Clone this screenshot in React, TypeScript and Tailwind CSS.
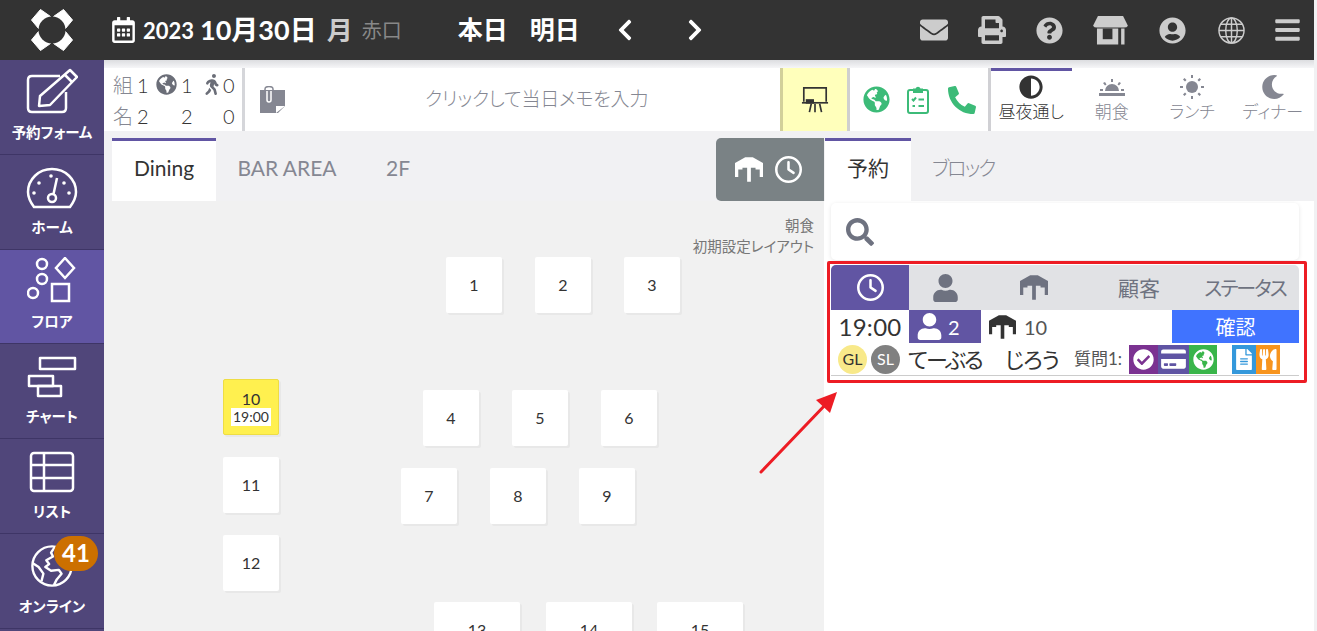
import { ReactNode } from 'react';
import {
  FaAdjust, FaBars, FaCheckCircle, FaChevronLeft, FaChevronRight, FaCreditCard, FaEnvelope,
  FaFileAlt, FaGlobeAmericas, FaMoon, FaPhoneAlt, FaPrint, FaQuestionCircle, FaRegCalendarAlt, FaSearch, FaUser,
  FaUserCircle, FaUtensils, FaWalking,
} from 'react-icons/fa';
import { FaRegClock } from 'react-icons/fa6';

function Logo() {
  return (
    <svg width="44" height="44" viewBox="0 0 44 44" className="shrink-0">
      <g fill="#fff" stroke="#fff" strokeWidth="1" strokeLinejoin="round">
        <path d="M1.500 12L10.500 1.500 20.500 8.500 8.500 20.500Z" />
        <path d="M42.500 12L33.500 1.500 23.500 8.500 35.500 20.500Z" />
        <path d="M1.500 32L10.500 42.500 20.500 35.500 8.500 23.500Z" />
        <path d="M42.500 32L33.500 42.500 23.500 35.500 35.500 23.500Z" />
      </g>
      <circle cx="22" cy="22" r="13.500" fill="#333" />
    </svg>
  );
}

function TableIcon({ className }: { className?: string }) {
  return (
    <svg viewBox="0 0 30 26" className={className} fill="currentColor">
      <path d="M11 0H19L30 6V11H0V6Z" />
      <path d="M0 10H3.500V21H0ZM26.500 10H30V21H26.500ZM13 10H17V26H13ZM3 10H8V13H3ZM22 10H27V13H22Z" />
    </svg>
  );
}

function StoreIcon() {
  return (
    <svg viewBox="0 0 36 30" className="w-[35px] h-[29px]" fill="#ccc">
      <path d="M5 0H31L36 10Q35 12 32 12H4Q1 12 0 10Z" />
      <path d="M4 13H26V29.500H4ZM29 13H32.500V29.500H29Z" />
      <path d="M10 13H20V24H10Z" fill="#333" />
    </svg>
  );
}

function EditIcon() {
  return (
    <svg viewBox="0 0 52 46" className="w-[52px] h-[46px]" fill="none" stroke="#fff" strokeWidth="2.500" strokeLinejoin="round">
      <path d="M34 8H6Q2 8 2 12V40Q2 44 6 44H36Q40 44 40 40V24" />
      <path d="M44 2L51 9 24 37 13 38 14 28Z" />
      <path d="M39 7L46 14" />
    </svg>
  );
}

function GaugeIcon() {
  return (
    <svg viewBox="0 0 52 42" className="w-[52px] h-[42px]" fill="none" stroke="#fff" strokeWidth="2.500">
      <path d="M8 40Q2 32 2 25A24 23 0 0 1 50 25Q50 32 44 40Z" strokeLinejoin="round" />
      <circle cx="26" cy="31" r="4" />
      <path d="M27.500 27L31 11" />
      <g fill="#fff" stroke="none">
        <circle cx="13" cy="16" r="1.800" /><circle cx="25" cy="9" r="1.800" /><circle cx="38" cy="16" r="1.800" />
        <circle cx="8" cy="26" r="1.800" /><circle cx="43" cy="26" r="1.800" />
      </g>
    </svg>
  );
}

function FloorIcon() {
  return (
    <svg viewBox="0 0 50 46" className="w-[50px] h-[46px]" fill="none" stroke="#fff" strokeWidth="2.500">
      <circle cx="15" cy="7" r="5" />
      <circle cx="15" cy="22" r="5" />
      <circle cx="6" cy="36" r="5" />
      <path d="M38 1L47 11 38 21 29 11Z" />
      <rect x="25" y="27" width="17" height="17" />
    </svg>
  );
}

function ChartIcon() {
  return (
    <svg viewBox="0 0 50 42" className="w-[50px] h-[42px]" fill="none" stroke="#fff" strokeWidth="2.500" strokeLinejoin="round">
      <rect x="13" y="2" width="35" height="11" />
      <rect x="2" y="20" width="24" height="10" />
      <rect x="11" y="30" width="23" height="10" />
    </svg>
  );
}

function ListIcon() {
  return (
    <svg viewBox="0 0 46 42" className="w-[46px] h-[42px]" fill="none" stroke="#fff" strokeWidth="2.500" strokeLinejoin="round">
      <rect x="2" y="2" width="42" height="38" rx="3" />
      <path d="M2 14H44M2 27H44M15 2V40" />
    </svg>
  );
}

function GlobeIcon() {
  return (
    <svg viewBox="0 0 46 46" className="w-[44px] h-[44px]" fill="none" stroke="#fff" strokeWidth="2.500" strokeLinejoin="round">
      <circle cx="23" cy="23" r="20.500" />
      <path d="M26 3L22 9 24 13 17 17 20 21 16 24 22 28 30 27 33 31 28 37 25 43" />
      <path d="M3 20L9 24 14 31 12 39" />
    </svg>
  );
}

function PresentationIcon() {
  return (
    <svg viewBox="0 0 30 30" className="w-[28px] h-[28px]" fill="none" stroke="#333" strokeWidth="1.800">
      <path d="M3 17V2H27V17" />
      <path d="M1 18H29" />
      <path d="M11 19L9 28M15 19V28M20 19L22 28" />
      <rect x="6" y="15" width="7" height="3" fill="#333" />
    </svg>
  );
}

function SunriseIcon() {
  return (
    <svg viewBox="0 0 26 24" className="w-[26px] h-[24px]" fill="#858792">
      <path d="M6 16A7 7 0 0 1 20 16ZM0 18H26V21H0ZM1 14H4V16H1ZM22 14H25V16H22Z" />
      <path d="M12 4H14V7H12ZM4 8L6 7 7.500 9.500 6 10.500ZM22 8L20 7 18.500 9.500 20 10.500Z" />
    </svg>
  );
}

function SunIcon() {
  return (
    <svg viewBox="0 0 24 24" className="w-[24px] h-[24px]" fill="#858792">
      <circle cx="12" cy="12" r="6" />
      <path d="M11 0H13V3H11ZM11 21H13V24H11ZM0 11H3V13H0ZM21 11H24V13H21Z" />
      <path d="M3 4.500L4.500 3 6.500 5 5 6.500ZM21 4.500L19.500 3 17.500 5 19 6.500ZM3 19.500L4.500 21 6.500 19 5 17.500ZM21 19.500L19.500 21 17.500 19 19 17.500Z" />
    </svg>
  );
}

function ClipboardIcon() {
  return (
    <svg viewBox="0 0 22 28" className="w-[22px] h-[28px]" fill="none" stroke="#3cbb78" strokeWidth="2">
      <path d="M7 4H3Q1 4 1 6V25Q1 27 3 27H19Q21 27 21 25V6Q21 4 19 4H15" />
      <path d="M7 6V3.500H9Q11 0 13 3.500H15V6Z" fill="#3cbb78" />
      <path d="M5 13L6.500 14.500 9 11.500M11.500 13.500H17M5.500 20H8M11.500 20H17" />
    </svg>
  );
}

function NoteIcon() {
  return (
    <svg viewBox="0 0 25 27" className="ml-[15px] w-[25px] h-[27px]">
      <path d="M0 4H25V20L18 27H0Z" fill="#858792" />
      <path d="M16 27V20H25Z" fill="#fff" />
      <path d="M5 4V15Q5 18 9 18 13 18 13 15V3Q13 0.500 9 0.500 5 0.500 5 3V4" fill="none" stroke="#858792" strokeWidth="1.500" />
      <path d="M7 5V14Q7 16 9 16 11 16 11 14V5" fill="none" stroke="#fff" strokeWidth="1.500" />
    </svg>
  );
}

const navItems = [
  { label: '予約フォーム', icon: <EditIcon /> },
  { label: 'ホーム', icon: <GaugeIcon /> },
  { label: 'フロア', icon: <FloorIcon />, active: true },
  { label: 'チャート', icon: <ChartIcon /> },
  { label: 'リスト', icon: <ListIcon /> },
  { label: 'オンライン', icon: <GlobeIcon />, badge: '41' },
];

const floorTables = [
  { no: '1', left: 342, top: 56 }, { no: '2', left: 431, top: 56 }, { no: '3', left: 520, top: 56 },
  { no: '4', left: 319, top: 189 }, { no: '5', left: 408, top: 189 }, { no: '6', left: 497, top: 189 },
  { no: '7', left: 297, top: 267 }, { no: '8', left: 386, top: 267 }, { no: '9', left: 475, top: 267 },
  { no: '11', left: 119, top: 256 }, { no: '12', left: 119, top: 334 },
];

const mealTabs = [
  { label: '昼夜通し', icon: <FaAdjust className="w-6 h-6 text-[#333]" />, active: true },
  { label: '朝食', icon: <SunriseIcon /> },
  { label: 'ランチ', icon: <SunIcon /> },
  { label: 'ディナー', icon: <FaMoon className="w-6 h-6 text-[#858792]" /> },
];

function TopIcon({ width, children }: { width: string; children: ReactNode }) {
  return <div className={`flex justify-center items-center ${width}`}>{children}</div>;
}

function StatusBox({ className, children }: { className: string; children: ReactNode }) {
  return <div className={`flex items-center justify-center h-[29px] text-white ${className}`}>{children}</div>;
}

export default function App() {
  return (
    <div className="relative h-[631px] w-[1317px] overflow-hidden bg-[#f1f1f3] font-[Lato,'Noto_Sans_CJK_JP',sans-serif] [font-feature-settings:'palt'] text-[#333]">
      <header className="flex items-center h-[60px] w-[1314px] bg-[#333] text-white">
        <div className="w-[104px] flex justify-center"><Logo /></div>
        <FaRegCalendarAlt className="ml-[8px] w-[23px] h-[26px]" />
        <span className="ml-[8px] text-[22px] font-bold">2023</span>
        <span className="ml-[6px] text-[27px] font-bold">10月30日</span>
        <span className="ml-[10px] text-[26px] font-bold text-[#ccc]">月</span>
        <span className="ml-[9px] text-[20px] text-[#888]">赤口</span>
        <span className="ml-[56px] text-[25px] font-bold">本日</span>
        <span className="ml-[22px] text-[25px] font-bold">明日</span>
        <FaChevronLeft className="ml-[37px] w-[16px] h-[24px]" />
        <FaChevronRight className="ml-[54px] w-[16px] h-[24px]" />
        <div className="ml-[217px] flex items-center text-[#ccc]">
          <TopIcon width="w-[28px]"><FaEnvelope className="w-[28px] h-[28px]" /></TopIcon>
          <TopIcon width="w-[28px] ml-[30px]"><FaPrint className="w-[28px] h-[28px]" /></TopIcon>
          <TopIcon width="w-[28px] ml-[30px]"><FaQuestionCircle className="w-[27px] h-[27px]" /></TopIcon>
          <TopIcon width="w-[35px] ml-[29px]"><StoreIcon /></TopIcon>
          <TopIcon width="w-[28px] ml-[31px]"><FaUserCircle className="w-[27px] h-[27px]" /></TopIcon>
          <TopIcon width="w-[28px] ml-[31px]">
            <svg viewBox="0 0 28 28" className="w-[27px] h-[27px]" fill="none" stroke="#ccc" strokeWidth="1.500">
              <circle cx="14" cy="14" r="13" />
              <ellipse cx="14" cy="14" rx="6" ry="13" />
              <path d="M14 1V27M1 14H27M3 7.500H25M3 20.500H25" />
            </svg>
          </TopIcon>
          <TopIcon width="w-[25px] ml-[29px]"><FaBars className="w-[25px] h-[28px]" /></TopIcon>
        </div>
      </header>

      <div className="flex h-[571px]">
        <nav className="w-[104px] shrink-0 bg-[#50467a] text-white">
          {navItems.map((item) => (
            <div
              key={item.label}
              className={`relative flex flex-col items-center justify-end h-[94.800px] pb-[11px] border-b border-[#3e3566] ${item.active ? 'bg-[#6155a3]' : ''}`}
            >
              {item.icon}
              <span className="mt-[9px] text-[14.500px] leading-[20px] font-bold whitespace-nowrap">{item.label}</span>
              {item.badge && (
                <span className="absolute left-[54px] top-[2px] w-[44px] h-[35px] rounded-full bg-[#cc7000] flex items-center justify-center text-[24px] font-bold leading-none">
                  {item.badge}
                </span>
              )}
            </div>
          ))}
        </nav>

        <main className="w-[1210px] shrink-0 flex flex-col">
          <div className="h-[8px] bg-gradient-to-b from-[#dcdde0] to-[#f6f6f8]" />
          <div className="flex h-[63px] bg-white">
            <div className="w-[138px] shrink-0 pl-[9px] text-[20px] leading-[30px] pt-[2px] font-light grid grid-cols-[24px_19px_25px_23px_19px_1fr] grid-rows-2">
              <span className="text-[#858792]">組</span>
              <span>1</span>
              <FaGlobeAmericas className="w-[21px] h-[21px] mt-[4px] text-[#6b6e78]" />
              <span>1</span>
              <FaWalking className="w-[16px] h-[21px] mt-[4px] text-[#6b6e78]" />
              <span>0</span>
              <span className="text-[#858792]">名</span>
              <span>2</span>
              <span />
              <span>2</span>
              <span />
              <span>0</span>
            </div>
            <div className="w-[538px] shrink-0 flex items-center border-l-[3px] border-[#d5d6da]">
              <NoteIcon />
              <span className="ml-[140px] text-[19px] tracking-[-0.200px] font-light text-[#858792] whitespace-nowrap">クリックして当日メモを入力</span>
            </div>
            <div className="w-[70px] shrink-0 flex items-center justify-center bg-[#ffffbb] border-x-[3px] border-l-[#d2d09a] border-r-[#cfcfcf]">
              <PresentationIcon />
            </div>
            <div className="w-[138px] shrink-0 flex items-center">
              <FaGlobeAmericas className="ml-[13px] w-[27px] h-[27px] text-[#3cbb78]" />
              <div className="ml-[17px]"><ClipboardIcon /></div>
              <FaPhoneAlt className="ml-[19px] w-[28px] h-[28px] text-[#3cbb78]" />
            </div>
            <div className="flex-1 flex border-l-[3px] border-[#d0d0d4]">
              {mealTabs.map((tab) => (
                <div
                  key={tab.label}
                  className={`w-[80.500px] flex flex-col items-center pt-[3px] border-t-[3px] ${tab.active ? 'border-[#6155a3] text-[#333]' : 'border-transparent text-[#858792]'}`}
                >
                  <div className="h-[26px] flex items-center">{tab.icon}</div>
                  <span className="text-[17px] leading-[24px] font-light whitespace-nowrap">{tab.label}</span>
                </div>
              ))}
            </div>
          </div>

          <div className="flex flex-1 min-h-0 pt-[7px]">
            <div className="flex-1 min-w-0 flex flex-col">
              <div className="flex h-[63px] text-[21px]">
                <div className="ml-[8px] w-[104px] bg-white border-t-[3px] border-[#6155a3] flex items-center justify-center pb-[7px]">Dining</div>
                <div className="w-[142px] flex items-center justify-center pb-[4px] text-[#858792]">BAR AREA</div>
                <div className="w-[80px] flex items-center justify-center pb-[4px] text-[#858792]">2F</div>
                <div className="ml-auto w-[108px] pr-[4px] bg-[#7a8285] rounded-l-[5px] flex items-center justify-center gap-[12px] text-white">
                  <TableIcon className="w-[28px] h-[25px]" />
                  <FaRegClock className="w-[27px] h-[27px]" />
                </div>
              </div>
              <div className="relative flex-1 bg-[#f1f1f1]">
                <div className="pt-[14px] pr-[10px] text-right text-[14.500px] leading-[21px] text-[#777]">
                  <div>朝食</div>
                  <div>初期設定レイアウト</div>
                </div>
                <div className="absolute left-[119px] top-[178px] w-[56px] h-[56px] rounded-[2px] bg-[#fff04f] border border-[#eedd44] shadow-[2px_2px_0_#e8e8e8] flex flex-col items-center justify-center text-[16px]">
                  <span className="leading-[19px]">10</span>
                  <span className="bg-white px-[2px] text-[14px] leading-[18px]">19:00</span>
                </div>
                {floorTables.map((t) => (
                  <div
                    key={t.no}
                    style={{ left: t.left, top: t.top }}
                    className="absolute w-[56px] h-[56px] rounded-[2px] bg-white shadow-[2px_2px_0_#e8e8e8] flex items-center justify-center text-[16px]"
                  >
                    {t.no}
                  </div>
                ))}
                {[{ no: '13', left: 330 }, { no: '14', left: 442 }, { no: '15', left: 553 }].map((t) => (
                  <div
                    key={t.no}
                    style={{ left: t.left, top: 401 }}
                    className="absolute w-[86px] h-[56px] rounded-[2px] bg-white shadow-[2px_2px_0_#e8e8e8] flex items-center justify-center text-[16px]"
                  >
                    {t.no}
                  </div>
                ))}
              </div>
            </div>

            <aside className="w-[490px] shrink-0 flex flex-col">
              <div className="flex h-[63px] text-[21px]">
                <div className="ml-[1px] w-[86px] bg-white border-t-[3px] border-[#6155a3] flex items-center justify-center pb-[7px]">予約</div>
                <div className="w-[104px] flex items-center justify-center pb-[4px] text-[20px] tracking-[-2px] font-light text-[#858792]">ブロック</div>
              </div>
              <div className="flex-1 bg-white pl-[7px] pt-[2px]">
                <div className="w-[468px] h-[57px] rounded-[5px] shadow-[0_1px_4px_rgba(0,0,0,0.1)] flex items-center pl-[15px]">
                  <FaSearch className="w-[28px] h-[28px] text-[#6e7280]" />
                </div>
                <div className="w-[468px] mt-[5px]">
                  <div className="flex h-[45px] bg-[#e1e2e5] rounded-t-[5px] text-[21px] text-[#6e7280]">
                    <div className="w-[78px] bg-[#6155a3] rounded-tl-[5px] flex items-center justify-center text-white"><FaRegClock className="w-[27px] h-[27px]" /></div>
                    <div className="w-[72px] flex items-center justify-center"><FaUser className="w-[25px] h-[28px]" /></div>
                    <div className="w-[106px] flex items-center justify-center"><TableIcon className="w-[28px] h-[25px]" /></div>
                    <div className="w-[104px] flex items-center justify-center">顧客</div>
                    <div className="flex-1 flex items-center justify-center text-[20px] tracking-[-2px] whitespace-nowrap">ステータス</div>
                  </div>
                  <div className="flex h-[33px] items-center">
                    <div className="w-[78px] text-center text-[24px] tracking-[0.300px] leading-none">19:00</div>
                    <div className="w-[72px] h-full bg-[#6155a3] text-white flex items-center pl-[8px] gap-[6px] text-[20px]">
                      <FaUser className="w-[25px] h-[27px]" />2
                    </div>
                    <div className="flex items-center ml-[8px] gap-[8px] text-[20px] text-[#555]">
                      <TableIcon className="w-[27px] h-[24px] text-[#333]" />10
                    </div>
                    <div className="ml-auto w-[127px] h-full bg-[#4073ff] text-white text-[20px] flex items-center justify-center">確認</div>
                  </div>
                  <div className="flex items-center h-[33px] border-b border-[#ccc] pl-[7px]">
                    <span className="w-[29px] h-[29px] rounded-full bg-[#f8e98a] flex items-center justify-center text-[16px]">GL</span>
                    <span className="ml-[4px] w-[29px] h-[29px] rounded-full bg-[#808080] text-white flex items-center justify-center text-[16px]">SL</span>
                    <span className="ml-[8px] w-[97px] text-[22px] tracking-[-2px] whitespace-nowrap">てーぶる</span>
                    <span className="w-[69px] text-[22px] tracking-[-1px] whitespace-nowrap">じろう</span>
                    <span className="w-[55px] text-[17px] text-[#555] whitespace-nowrap">質問1:</span>
                    <StatusBox className="w-[29px] bg-[#7b3291]"><FaCheckCircle className="w-[21px] h-[21px]" /></StatusBox>
                    <StatusBox className="w-[31px] bg-[#5f54a3]"><FaCreditCard className="w-[25px] h-[22px]" /></StatusBox>
                    <StatusBox className="w-[28px] bg-[#39b54a]"><FaGlobeAmericas className="w-[21px] h-[21px]" /></StatusBox>
                    <StatusBox className="ml-[15px] w-[24px] bg-[#3498db]"><FaFileAlt className="w-[16px] h-[21px]" /></StatusBox>
                    <StatusBox className="w-[24px] bg-[#f7941e]"><FaUtensils className="w-[18px] h-[21px]" /></StatusBox>
                  </div>
                </div>
              </div>
            </aside>
          </div>
        </main>
      </div>

      {/* annotation drawn on top of the screenshot */}
      <div className="absolute left-[827px] top-[261px] w-[480px] h-[122px] border-[3px] border-[#ed1c24] rounded-[2px]" />
      <svg className="absolute left-[750px] top-[385px] w-[95px] h-[95px]" viewBox="0 0 95 95">
        <path d="M11 87L78 17" stroke="#ed1c24" strokeWidth="3" strokeLinecap="round" />
        <path d="M87 7L80 28 66 15Z" fill="#ed1c24" />
      </svg>
    </div>
  );
}
